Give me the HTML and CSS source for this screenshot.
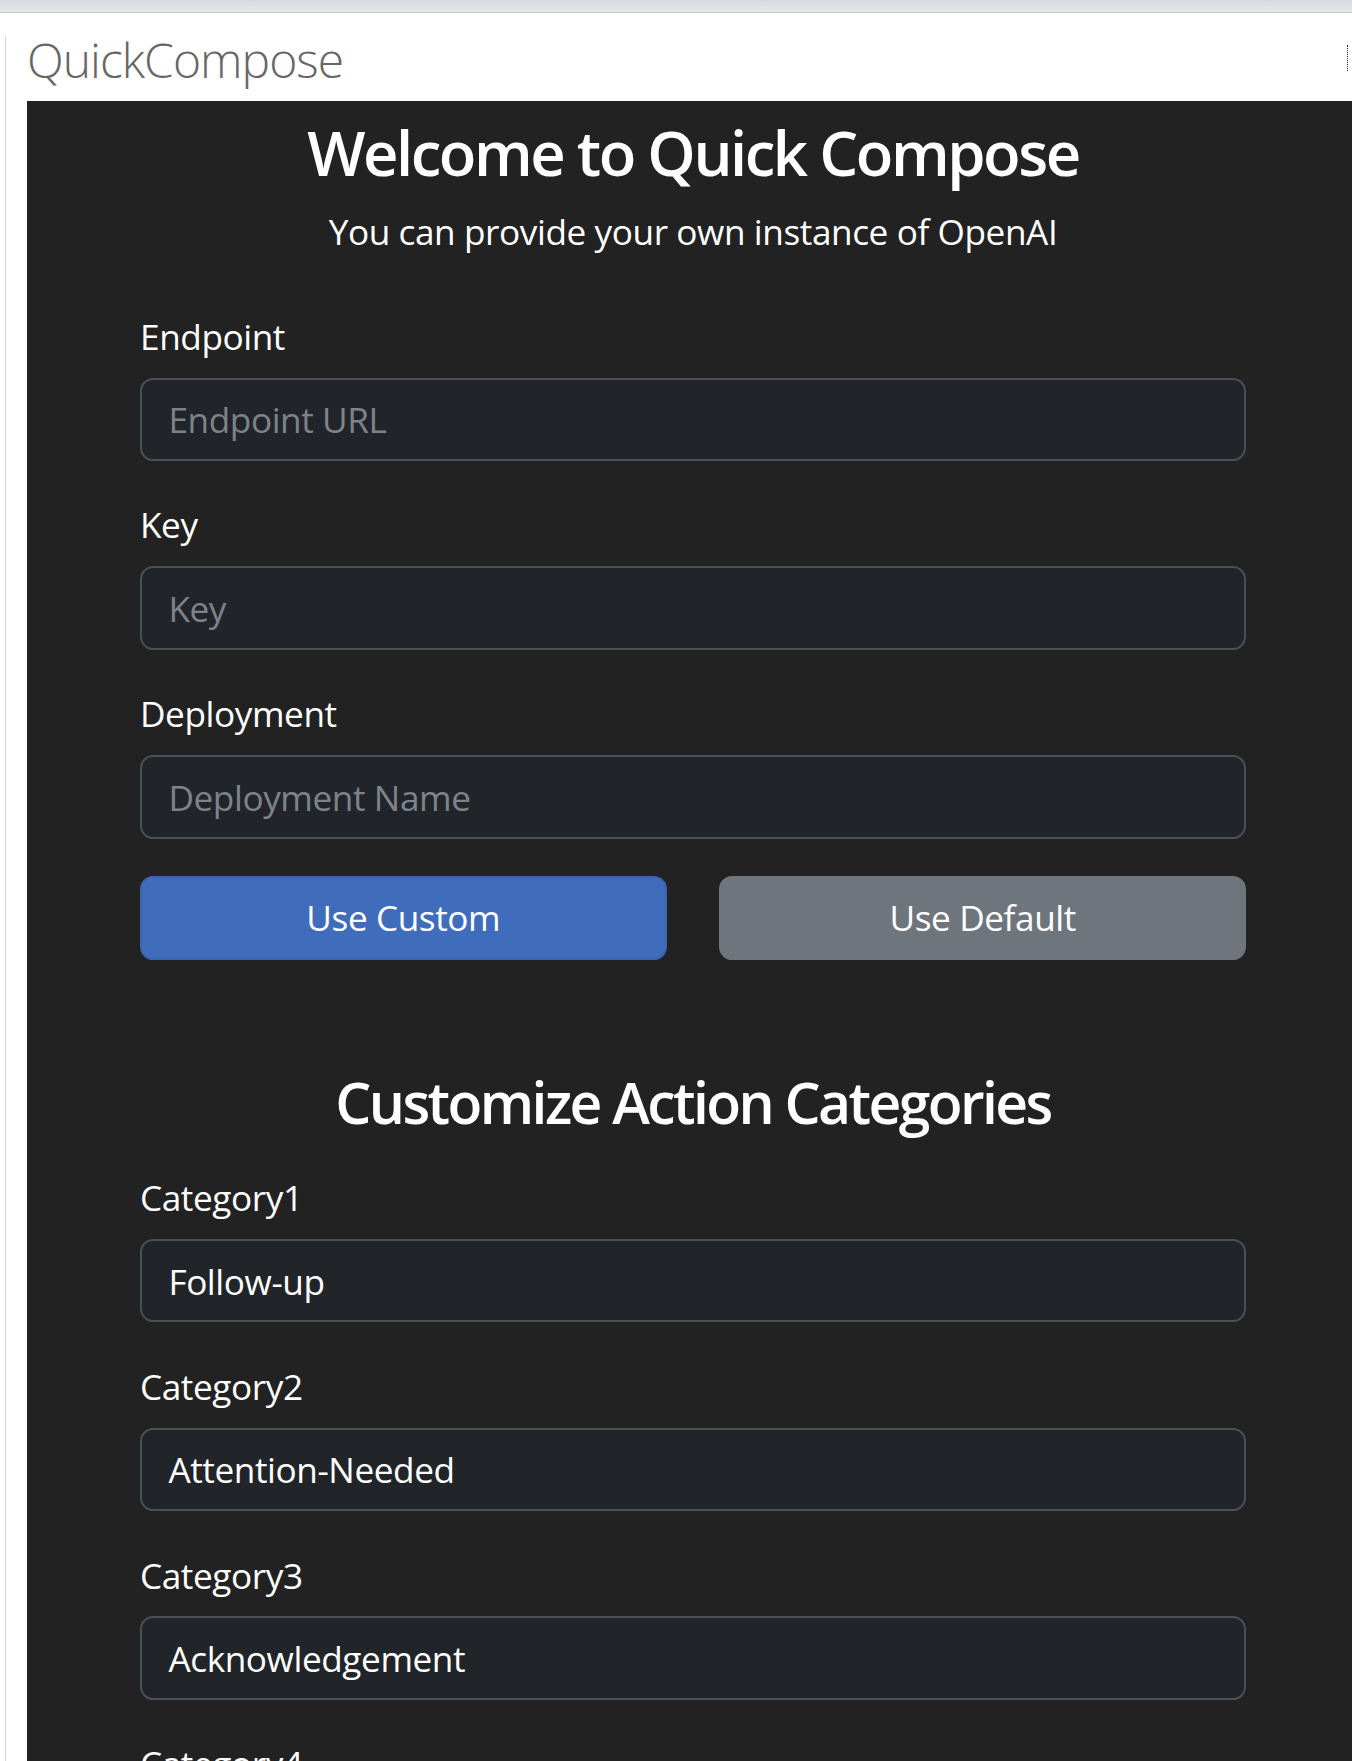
FILE: index.html
```html
<!DOCTYPE html>
<html lang="en">
<head>
<meta charset="utf-8">
<title>QuickCompose</title>
<link rel="stylesheet" href="styles.css">
</head>
<body>
<div class="topbar"></div>
<div class="frame">
  <div class="app-title">QuickCompose</div>
  <div class="gripper"></div>
  <main class="panel">
    <h3 class="heading">Welcome to Quick Compose</h3>
    <p class="sub">You can provide your own instance of OpenAI</p>

    <div class="group">
      <label class="label" for="endpoint">Endpoint</label>
      <input class="field" id="endpoint" type="text" placeholder="Endpoint URL">
    </div>
    <div class="group">
      <label class="label" for="key">Key</label>
      <input class="field" id="key" type="text" placeholder="Key">
    </div>
    <div class="group">
      <label class="label" for="deployment">Deployment</label>
      <input class="field" id="deployment" type="text" placeholder="Deployment Name">
    </div>

    <div class="buttons">
      <button class="btn btn-primary" type="button">Use Custom</button>
      <button class="btn btn-secondary" type="button">Use Default</button>
    </div>

    <h3 class="heading heading-second">Customize Action Categories</h3>

    <div class="group">
      <label class="label" for="cat1">Category1</label>
      <input class="field" id="cat1" type="text" value="Follow-up">
    </div>
    <div class="group">
      <label class="label" for="cat2">Category2</label>
      <input class="field" id="cat2" type="text" value="Attention-Needed">
    </div>
    <div class="group">
      <label class="label" for="cat3">Category3</label>
      <input class="field" id="cat3" type="text" value="Acknowledgement">
    </div>
    <div class="group">
      <label class="label" for="cat4">Category4</label>
      <input class="field" id="cat4" type="text" value="Information">
    </div>
  </main>
</div>
</body>
</html>
```

FILE: styles.css
```css
html, body {
  margin: 0;
  padding: 0;
}

body {
  background: #ffffff;
  overflow: hidden;
  font-family: "Open Sans", "Noto Sans", "Liberation Sans", sans-serif;
}

.topbar {
  height: 12px;
  background: linear-gradient(#d6d9dd, #e7e9ec);
  border-bottom: 1px solid #c7cacd;
}

.frame {
  position: relative;
  margin: 23px 0 0 5px;
  border-left: 1px solid #d6d6d6;
  padding-left: 21px;
  width: 1332px;
}

.app-title {
  font-size: 48px;
  font-weight: 300;
  line-height: 48px;
  color: #666666;
  letter-spacing: -0.02em;
  margin: 1px 0 17px 0;
}

.gripper {
  position: absolute;
  left: 1341px;
  top: 9px;
  width: 0;
  height: 26px;
  border-left: 1px dotted #222;
}

.panel {
  box-sizing: border-box;
  width: 1332px;
  background: #222222;
  color: #ffffff;
  padding: 15px 113px 60px 113px;
  font-size: 35.2px;
  line-height: 52.8px;
  letter-spacing: -0.012em;
}

.heading {
  font-size: 61.6px;
  font-weight: 600;
  line-height: 1.2;
  text-align: center;
  margin: 0 0 15px 0;
  letter-spacing: -0.04em;
}

.heading-second {
  font-size: 57px;
  letter-spacing: -0.045em;
  margin: 108px 0 35px 0;
}

.sub {
  margin: 0 0 52px 0;
  text-align: center;
}

.group {
  margin-bottom: 37.4px;
}

.label {
  display: block;
  margin-bottom: 15px;
}

.field {
  display: block;
  box-sizing: border-box;
  width: 100%;
  height: 83.6px;
  padding: 13.2px 26.4px;
  background: #212529;
  border: 2px solid #4a5057;
  border-radius: 13.2px;
  color: #ffffff;
  font-family: inherit;
  font-size: 35.2px;
  line-height: 52.8px;
  letter-spacing: -0.012em;
  outline: none;
}

.field::placeholder {
  color: #7d838a;
  opacity: 1;
}

.buttons {
  display: grid;
  grid-template-columns: 1fr 1fr;
  column-gap: 52.8px;
}

.btn {
  box-sizing: border-box;
  height: 83.6px;
  padding: 13.2px 26.4px;
  border: 2px solid transparent;
  border-radius: 13.2px;
  color: #ffffff;
  font-family: inherit;
  font-size: 35.2px;
  line-height: 52.8px;
  letter-spacing: -0.012em;
  text-align: center;
}

.btn-primary {
  background: #3f6dbb;
  border-color: #3a66b0;
}

.btn-secondary {
  background: #6f757d;
  border-color: #6f757d;
}
```
